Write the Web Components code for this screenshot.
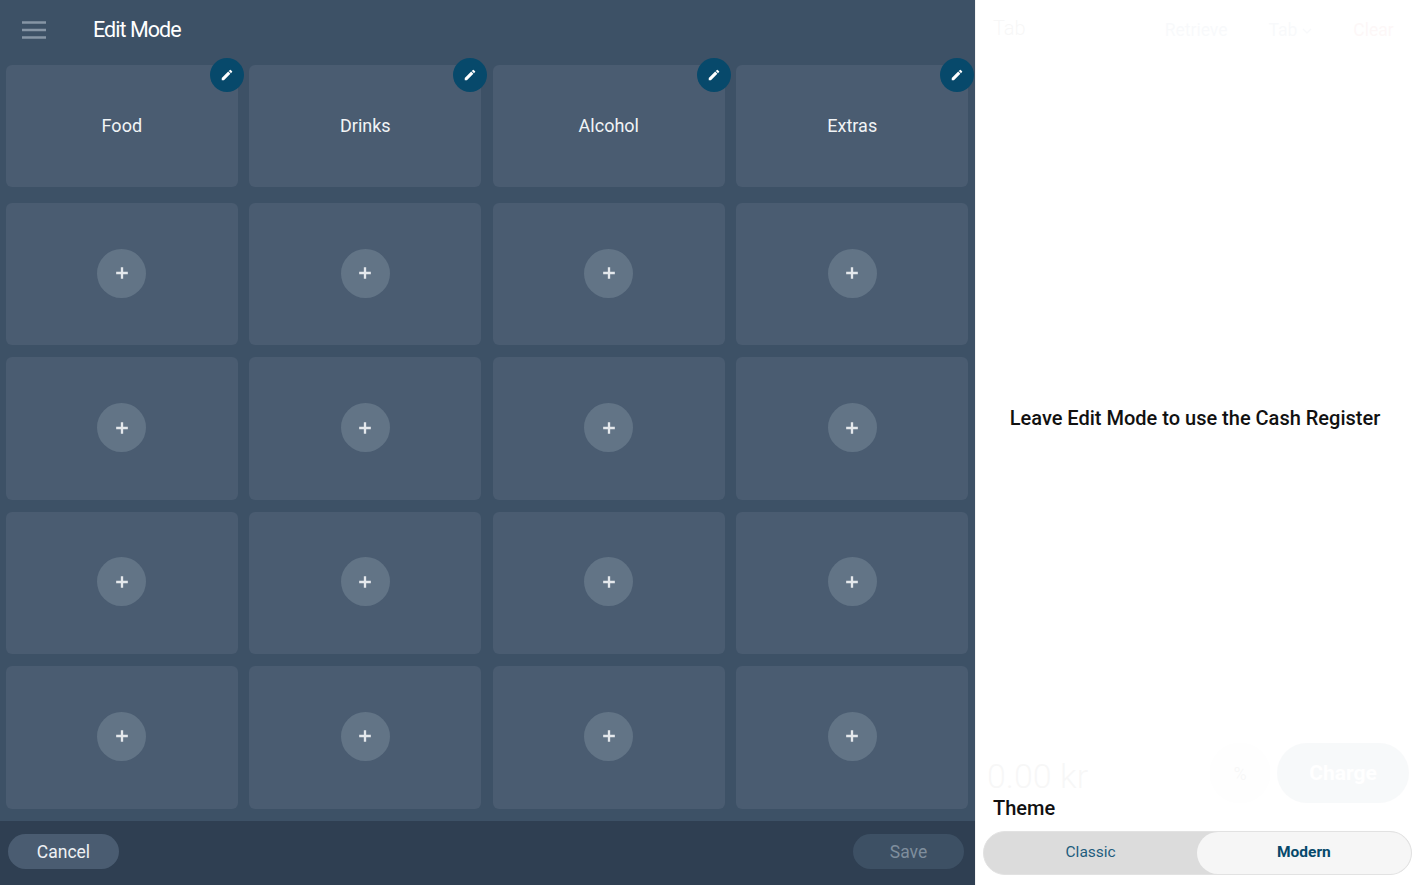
<!DOCTYPE html>
<html lang="en"><head><meta charset="utf-8"><title>Edit Mode</title>
<style>
html,body{margin:0;height:100%;overflow:hidden;background:#fff;font-family:Roboto,"Liberation Sans",sans-serif}
</style></head><body>
<pos-app></pos-app>
<script>
const def=(name,css,html)=>{
  customElements.define(name,class extends HTMLElement{
    constructor(){super();this.attachShadow({mode:'open'}).innerHTML=`<style>${css}</style>${typeof html==='function'?html(this):html}`;}
  });
};
def('pos-category',`
:host{display:flex;position:relative;align-items:center;justify-content:center;background:#4a5c71;border-radius:6px;color:#f1f4f6;font-size:18px;}
.b{position:absolute;top:-7px;right:-6px;width:34px;height:34px;border-radius:50%;background:#07496b;display:flex;align-items:center;justify-content:center}
svg{width:14px;height:14px;display:block}
`,`<slot></slot><span class="b"><svg viewBox="0 0 24 24"><path fill="#fff" d="M3 17.25V21h3.75L17.81 9.94l-3.75-3.75L3 17.25zM20.71 7.04a1 1 0 0 0 0-1.41l-2.34-2.34a1 1 0 0 0-1.41 0l-1.83 1.83 3.75 3.75 1.83-1.83z"/></svg></span>`);
def('pos-slot',`
:host{display:flex;align-items:center;justify-content:center;background:#4a5c71;border-radius:6px;padding-bottom:2px;box-sizing:border-box}
.c{width:49px;height:49px;border-radius:50%;background:#627486;display:flex;align-items:center;justify-content:center}
svg{width:20px;height:20px;display:block}
`,`<span class="c"><svg viewBox="0 0 24 24"><path fill="none" stroke="#e4e8ec" stroke-width="2.8" d="M12 5v14M5 12h14"/></svg></span>`);
def('pos-topbar',`
:host{display:flex;align-items:center;height:59px;color:#fff}
svg{width:24px;height:20px;margin-left:22px;display:block}
.t{margin-left:47px;font-size:21.5px;letter-spacing:-.95px;color:#fff}
`,`<svg viewBox="0 0 24 20"><path stroke="#8695a5" stroke-width="2.3" d="M0 2.5h24M0 10h24M0 17.5h24"/></svg><span class="t"><slot></slot></span>`);
def('pos-pill',`
:host{display:flex;align-items:center;justify-content:center;height:35px;width:111px;border-radius:18px;background:#4a5c71;color:#eef1f4;font-size:17.5px}
:host([disabled]){background:#3d5064;color:#7f8e9d}
`,`<slot></slot>`);
def('pos-footer',`
:host{display:flex;align-items:center;justify-content:space-between;height:64px;background:#2f3f52;padding:0 11px 3px 8px;box-sizing:border-box}
`,`<slot></slot>`);
def('pos-grid',`
:host{display:grid;flex:1;min-height:0;grid-template-columns:repeat(4,1fr);column-gap:11.4px;grid-template-rows:126px repeat(4,142.4px);row-gap:12px;padding:6px 6.7px 0 5.8px}
::slotted(:nth-child(-n+4)){margin-bottom:4.5px;}
`,`<slot></slot>`);
def('pos-editor',`
:host{display:flex;flex-direction:column;width:975px;flex:none;height:100%;background:#3d5166}
`,`<slot></slot>`);
def('pos-ghost',`
:host{display:flex;flex-direction:column;flex:1;min-height:0;opacity:.03;color:#223;box-sizing:border-box}
.top{display:flex;align-items:center;height:59px;font-size:17.5px;color:#3a6a9a}
.tab{margin-left:17px;font-size:20px;font-weight:300;color:#222;margin-top:-3px}
.r{margin-left:139px}.m{margin-left:41px;display:flex;align-items:center;gap:5px}.c{margin-left:41px;color:#c22}
.m svg{width:10px;height:6px;display:block;margin-top:2px}
.mid{flex:1}
.bot{display:flex;align-items:center;height:60px;margin-bottom:-9px;padding:0 5px 0 11px}
.amt{font-size:34px;font-weight:300;color:#222;flex:1;margin-top:5px}
.pc{width:60px;height:60px;border-radius:50%;display:flex;align-items:center;justify-content:center;background:#eee;color:#222;font-size:18px;margin-right:7px}
.ch{width:132px;height:60px;border-radius:30px;background:#33587a;color:#fff;font-weight:700;font-size:21px;display:flex;align-items:center;justify-content:center}
`,`<div class="top"><span class="tab">Tab</span><span class="r">Retrieve</span><span class="m">Tab<svg viewBox="0 0 10 6"><path fill="none" stroke="currentColor" stroke-width="1.2" d="M1 1l4 4 4-4"/></svg></span><span class="c">Clear</span></div>
<div class="mid"></div>
<div class="bot"><span class="amt">0.00 kr</span><span class="pc">%</span><span class="ch">Charge</span></div>`);
def('pos-message',`
:host{position:absolute;left:0;right:0;top:405px;text-align:center;font-size:20px;font-weight:500;color:#111;line-height:27px}
`,`<slot></slot>`);
def('pos-theme',`
:host{display:block;position:relative;padding:0 2.5px 10px 7px;margin-top:2px}
.l{font-size:20px;font-weight:500;color:#111;padding-left:10px;line-height:24px;margin-bottom:11px}
.t{display:flex;height:44px;box-sizing:border-box;border-radius:22px;background:#dcdcdc;border:1px solid #e2e2e2;font-size:15.5px;color:#1e5c7c}
.t span{flex:1;display:flex;align-items:center;justify-content:center;border-radius:21px;padding-bottom:2px}
.t .on{background:#f6f6f6;color:#07496b;font-weight:700}
`,`<div class="l">Theme</div><div class="t"><span>Classic</span><span class="on">Modern</span></div>`);
def('pos-register',`
:host{display:flex;flex-direction:column;position:relative;flex:1;height:100%;border-left:1px solid #f3f3f3;box-sizing:border-box;background:#fff}
`,`<slot></slot>`);
def('pos-app',`
:host{display:flex;width:1414px;height:885px}
`,()=>{
  const cats=['Food','Drinks','Alcohol','Extras'].map(c=>`<pos-category>${c}</pos-category>`).join('');
  const slots='<pos-slot></pos-slot>'.repeat(16);
  return `<pos-editor><pos-topbar>Edit Mode</pos-topbar><pos-grid>${cats}${slots}</pos-grid><pos-footer><pos-pill>Cancel</pos-pill><pos-pill disabled>Save</pos-pill></pos-footer></pos-editor>
  <pos-register><pos-ghost></pos-ghost><pos-message>Leave Edit Mode to use the Cash Register</pos-message><pos-theme></pos-theme></pos-register>`;
});
</script>
</body></html>
